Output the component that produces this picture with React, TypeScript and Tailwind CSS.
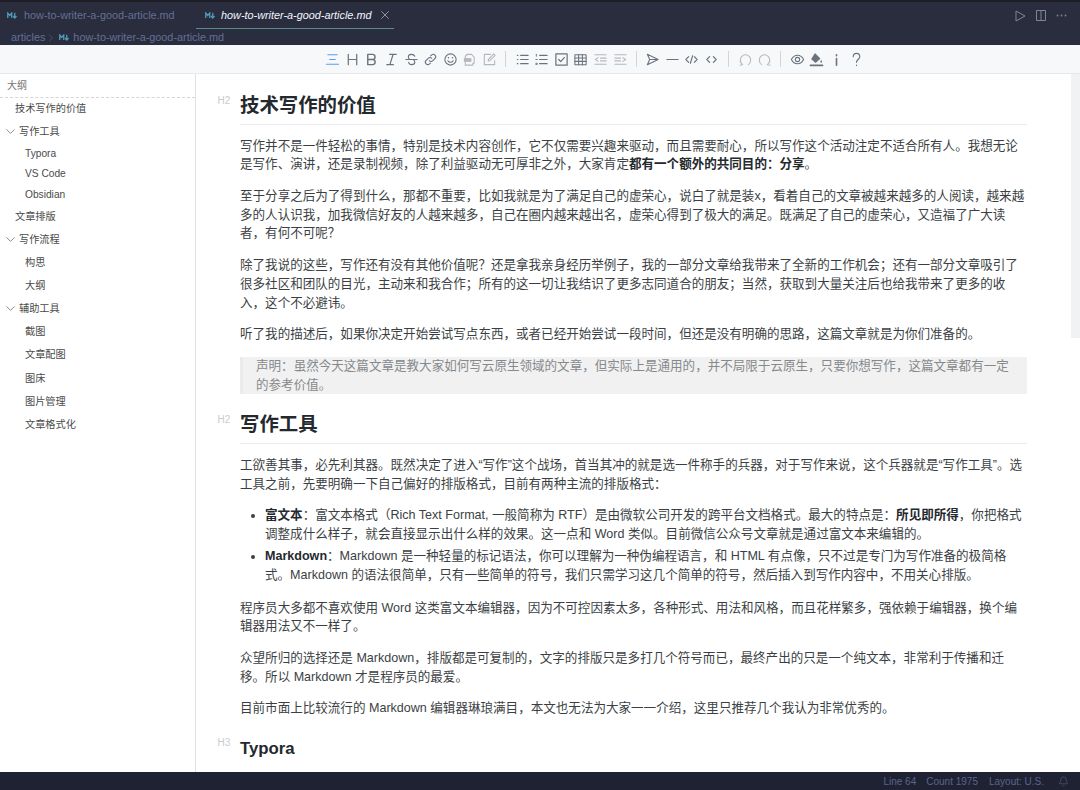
import React from "react";
import { ChevronDown, ChevronRight, X, Bell } from "lucide-react";

const FONT = "font-['Liberation_Sans','Noto_Sans_CJK_SC',sans-serif]";

function MdIcon() {
  return (
    <svg width="10" height="7" viewBox="0 0 20 14" fill="none" stroke="#519aba" strokeWidth="2.6" className="shrink-0">
      <path d="M1.5 12V2l4 5 4-5v10" />
      <path d="M15.5 1.5V11M12 8l3.5 4L19 8" />
    </svg>
  );
}

function Ico({ children, color = "#6a737d" }: { children: React.ReactNode; color?: string }) {
  return (
    <svg width="15" height="15" viewBox="0 0 16 16" fill="none" stroke={color} strokeWidth="1.15" strokeLinecap="round" strokeLinejoin="round">
      {children}
    </svg>
  );
}

function TB({ children }: { children: React.ReactNode }) {
  return <div className="w-[19.6px] h-[20px] flex items-center justify-center shrink-0">{children}</div>;
}

function Sep({ ml = "ml-[4px]", mr = "mr-[8px]" }: { ml?: string; mr?: string }) {
  return <div className={`w-px h-[16px] bg-[#d1d5da] shrink-0 ${ml} ${mr}`} />;
}

const LIGHT = "#b4b8bd";

function Toolbar() {
  return (
    <div className="h-[29px] bg-[#f6f8fa] border-b border-[#e6e8ea] flex items-center pl-[323px] shrink-0">
      <TB><Ico color="#5b9bf5"><path d="M3 3h10M5 8h6M1.500 13h13" strokeWidth="1.100" /></Ico></TB>
      <TB><Ico><path d="M3.500 2.500v11M12.500 2.500v11M3.500 8h9" strokeWidth="1.300" /></Ico></TB>
      <TB><Ico><path d="M4 2.500h5a2.700 2.700 0 0 1 0 5.500H4zM4 8h5.600a2.800 2.800 0 0 1 0 5.500H4z" strokeWidth="1.500" /></Ico></TB>
      <TB><Ico><path d="M6 2.500h7M3 13.500h7M9.700 2.500 6.300 13.500" strokeWidth="1.300" /></Ico></TB>
      <TB><Ico><path d="M2 8h12M11.500 4.500C11 3 9.700 2.500 8 2.500c-2 0-3.400 1-3.400 2.600 0 1 .5 1.900 1.400 2.900M5 11c.3 1.700 1.600 2.500 3.200 2.500 2 0 3.300-1 3.300-2.500 0-.8-.3-1.400-.8-2" /></Ico></TB>
      <TB><Ico><path d="M6.700 9.300a2.600 2.600 0 0 0 3.700 0l2.300-2.300a2.600 2.600 0 0 0-3.700-3.700l-.9.9M9.300 6.700a2.600 2.600 0 0 0-3.700 0L3.300 9a2.600 2.600 0 0 0 3.700 3.700l.9-.9" /></Ico></TB>
      <TB><Ico><circle cx="8" cy="8" r="6" /><path d="M5.200 9.300c.7 1.200 1.700 1.700 2.800 1.700s2.100-.5 2.800-1.700" /><path d="M5.800 6.200h.01M10.200 6.200h.01" strokeWidth="1.600" /></Ico></TB>
      <TB><Ico color={LIGHT}><path d="M5 4V2.500h5l3 3V12h-1.500M5 4H3.500v10H11.500v-2" /><rect x="2" y="6.500" width="8" height="4" fill={LIGHT} stroke="none" /></Ico></TB>
      <TB><Ico color={LIGHT}><path d="M13.500 9v4.500h-11v-11H9" /><path d="M6.500 9.500l.5-2 5.500-5.500 1.500 1.500L8.500 9z" /></Ico></TB>
      <Sep ml="ml-[6px]" mr="mr-[6px]" />
      <TB><Ico><path d="M6 3.500h8M6 8h8M6 12.500h8M2.500 3.500h.6M2.500 8h.6M2.500 12.500h.6" strokeWidth="1.300" /></Ico></TB>
      <TB><Ico><path d="M6 3.500h8M6 8h8M6 12.500h8" strokeWidth="1.300" /><path d="M2.500 2.500v2M2 8h1.500M2 12h1.500v1.200H2" strokeWidth="1" /></Ico></TB>
      <TB><Ico><rect x="2" y="2" width="12" height="12" strokeWidth="1.300" /><path d="M5 8l2.200 2.200L11 6" strokeWidth="1.300" /></Ico></TB>
      <TB><Ico><rect x="2" y="3" width="12" height="10.500" strokeWidth="1.100" /><path d="M2 6.500h12M2 10h12M6 3v10.500M10 3v10.500" strokeWidth="1.100" /></Ico></TB>
      <TB><Ico color={LIGHT}><path d="M2 3h12M8 6.500h6M8 9.500h6M2 13h12M5.500 6 2.500 8l3 2" /></Ico></TB>
      <TB><Ico color={LIGHT}><path d="M2 3h12M2 6.500h6M2 9.500h6M2 13h12M10.500 6l3 2-3 2" /></Ico></TB>
      <Sep ml="ml-[6px]" mr="mr-[6px]" />
      <TB><Ico><path d="M2.500 2.500 14 8 2.500 13.500 5 8zM5 8h9" strokeWidth="1.150" /></Ico></TB>
      <TB><Ico><path d="M2 8h12" strokeWidth="1.300" /></Ico></TB>
      <TB><Ico><path d="M5 5 2 8l3 3M11 5l3 3-3 3M9.200 4 6.800 12" strokeWidth="1.200" /></Ico></TB>
      <TB><Ico><path d="M6 5 3 8l3 3M10 5l3 3-3 3" strokeWidth="1.300" /></Ico></TB>
      <Sep ml="ml-[7px]" mr="mr-[6px]" />
      <TB><Ico color={LIGHT}><path d="M5 13.500C3.200 12.500 2.500 10.500 2.500 8.500a5.500 5.500 0 0 1 11 0c0 2-.7 4-2.500 5" strokeWidth="1.100" /><path d="M2.200 10.500 5 13.500l-3 .6" strokeWidth="1" /></Ico></TB>
      <TB><Ico color={LIGHT}><path d="M11 13.500c1.800-1 2.500-3 2.500-5a5.500 5.500 0 0 0-11 0c0 2 .7 4 2.500 5" strokeWidth="1.100" /><path d="M13.800 10.500 11 13.500l3 .6" strokeWidth="1" /></Ico></TB>
      <Sep ml="ml-[6px]" mr="mr-[6px]" />
      <TB><Ico><path d="M1.500 8C3 5 5.300 3.500 8 3.500S13 5 14.500 8C13 11 10.700 12.500 8 12.500S3 11 1.500 8z" /><circle cx="8" cy="8" r="2.300" /></Ico></TB>
      <TB><Ico><path d="M6.500 2 11.500 7 7 11 3 7.500z" fill="#6a737d" /><path d="M13 8.500c.6 1 .9 1.500.9 2a.9.9 0 0 1-1.800 0c0-.5.3-1 .9-2z" fill="#6a737d" stroke="none" /><path d="M1.500 14.300h13" strokeWidth="1.700" /></Ico></TB>
      <TB><Ico><path d="M8 7v7M8 3v.9" strokeWidth="1.700" /></Ico></TB>
      <TB><Ico><path d="M4.500 5c0-2 1.500-3.500 3.500-3.500S11.500 3 11.500 5c0 2.500-3.500 3-3.500 6M8 13.800v.6" strokeWidth="1.200" /></Ico></TB>
    </div>
  );
}

type Row = { t: string; pl: string; latin?: boolean; open?: boolean };
const outline: Row[] = [
  { t: "技术写作的价值", pl: "pl-[15px]" },
  { t: "写作工具", pl: "pl-[19px]", open: true },
  { t: "Typora", pl: "pl-[25px]", latin: true },
  { t: "VS Code", pl: "pl-[25px]", latin: true },
  { t: "Obsidian", pl: "pl-[25px]", latin: true },
  { t: "文章排版", pl: "pl-[15px]" },
  { t: "写作流程", pl: "pl-[19px]", open: true },
  { t: "构思", pl: "pl-[25px]" },
  { t: "大纲", pl: "pl-[25px]" },
  { t: "辅助工具", pl: "pl-[19px]", open: true },
  { t: "截图", pl: "pl-[25px]" },
  { t: "文章配图", pl: "pl-[25px]" },
  { t: "图床", pl: "pl-[25px]" },
  { t: "图片管理", pl: "pl-[25px]" },
  { t: "文章格式化", pl: "pl-[25px]" },
];

function Sidebar() {
  return (
    <aside className="w-[196px] shrink-0 border-r border-[#dfe2e5] bg-white pt-[1px]">
      <div className="h-[23px] flex items-center pl-[7px] pb-[1px] text-[10px] text-[#777] border-b border-dashed border-[#d5d5d5]">大纲</div>
      <div className="-mt-[1px]">
        {outline.map((r) => (
          <div
            key={r.t}
            className={`relative flex items-center text-[10.2px] text-[#4a4a4a] ${r.pl} ${r.latin ? "h-[20.6px]" : "h-[23.1px]"}`}
          >
            {r.open && <ChevronDown size={15} strokeWidth={1.1} className="absolute left-[3px] top-[4px] text-[#555]" />}
            {r.t}
          </div>
        ))}
      </div>
    </aside>
  );
}

function H2({ children }: { children: React.ReactNode }) {
  return (
    <h2 className="relative text-[19.4px] leading-[27px] font-bold text-[#24292e] pb-[4.500px] border-b border-[#eaecef] mb-[12px]">
      <span className="absolute left-[-22.500px] top-[-5px] text-[10px] font-normal text-[#c8ccd0]">H2</span>
      {children}
    </h2>
  );
}

function P({ children }: { children: React.ReactNode }) {
  return <p className="mb-[12.800px]">{children}</p>;
}

function Article() {
  return (
    <main className="relative flex-1 min-w-0 overflow-hidden bg-white pl-[44px] pr-[53px] pt-[18px] text-[12.55px] leading-[18.800px] text-[#3b3f44]">
      <H2>技术写作的价值</H2>
      <P>写作并不是一件轻松的事情，特别是技术内容创作，它不仅需要兴趣来驱动，而且需要耐心，所以写作这个活动注定不适合所有人。我想无论是写作、演讲，还是录制视频，除了利益驱动无可厚非之外，大家肯定<b className="text-[#24292e]">都有一个额外的共同目的：分享</b>。</P>
      <P>至于分享之后为了得到什么，那都不重要，比如我就是为了满足自己的虚荣心，说白了就是装x，看着自己的文章被越来越多的人阅读，越来越多的人认识我，加我微信好友的人越来越多，自己在圈内越来越出名，虚荣心得到了极大的满足。既满足了自己的虚荣心，又造福了广大读者，有何不可呢？</P>
      <P>除了我说的这些，写作还有没有其他价值呢？还是拿我亲身经历举例子，我的一部分文章给我带来了全新的工作机会；还有一部分文章吸引了很多社区和团队的目光，主动来和我合作；所有的这一切让我结识了更多志同道合的朋友；当然，获取到大量关注后也给我带来了更多的收入，这个不必避讳。</P>
      <P>听了我的描述后，如果你决定开始尝试写点东西，或者已经开始尝试一段时间，但还是没有明确的思路，这篇文章就是为你们准备的。</P>
      <blockquote className="bg-[#f1f1f1] border-l-[3px] border-[#ebebeb] pl-[13px] pr-[8px] mb-[17px] text-[#86898c]">声明：虽然今天这篇文章是教大家如何写云原生领域的文章，但实际上是通用的，并不局限于云原生，只要你想写作，这篇文章都有一定的参考价值。</blockquote>
      <H2>写作工具</H2>
      <P>工欲善其事，必先利其器。既然决定了进入“写作”这个战场，首当其冲的就是选一件称手的兵器，对于写作来说，这个兵器就是“写作工具”。选工具之前，先要明确一下自己偏好的排版格式，目前有两种主流的排版格式：</P>
      <ul className="list-disc pl-[25px] mb-[13.500px]">
        <li className="mb-[3.500px]"><b className="text-[#24292e]">富文本</b>：富文本格式（Rich Text Format, 一般简称为 RTF）是由微软公司开发的跨平台文档格式。最大的特点是：<b className="text-[#24292e]">所见即所得</b>，你把格式调整成什么样子，就会直接显示出什么样的效果。这一点和 Word 类似。目前微信公众号文章就是通过富文本来编辑的。</li>
        <li><b className="text-[#24292e]">Markdown</b>：Markdown 是一种轻量的标记语法，你可以理解为一种伪编程语言，和 HTML 有点像，只不过是专门为写作准备的极简格式。Markdown 的语法很简单，只有一些简单的符号，我们只需学习这几个简单的符号，然后插入到写作内容中，不用关心排版。</li>
      </ul>
      <P>程序员大多都不喜欢使用 Word 这类富文本编辑器，因为不可控因素太多，各种形式、用法和风格，而且花样繁多，强依赖于编辑器，换个编辑器用法又不一样了。</P>
      <P>众望所归的选择还是 Markdown，排版都是可复制的，文字的排版只是多打几个符号而已，最终产出的只是一个纯文本，非常利于传播和迁移。所以 Markdown 才是程序员的最爱。</P>
      <P>目前市面上比较流行的 Markdown 编辑器琳琅满目，本文也无法为大家一一介绍，这里只推荐几个我认为非常优秀的。</P>
      <h3 className="relative mt-[20px] text-[16.800px] leading-[22px] font-bold text-[#24292e]">
        <span className="absolute left-[-22.500px] top-[-6px] text-[10px] font-normal text-[#c8ccd0]">H3</span>
        Typora
      </h3>
      <div className="absolute right-0 top-0 w-[9px] h-[264px] bg-[#f1f2f4]" />
    </main>
  );
}

export default function App() {
  return (
    <div className={`w-[1080px] h-[790px] overflow-hidden flex flex-col bg-white ${FONT}`}>
      <div className="bg-[#292d3e] border-t-2 border-[#1d1e26] shrink-0">
        <div className="h-[27px] flex items-stretch text-[10.850px] whitespace-nowrap">
          <div className="w-[196px] flex items-center pl-[7px] gap-[7px] text-[#676e95]">
            <MdIcon />
            <span>how-to-writer-a-good-article.md</span>
          </div>
          <div className="w-[198px] flex items-center pl-[9px] gap-[6px] text-[#f4f6ff] italic border-b border-[#5d8a8c]">
            <MdIcon />
            <span>how-to-writer-a-good-article.md</span>
            <X size={14} strokeWidth={1.1} className="ml-[0.5px] text-[#c5cadf]" />
          </div>
          <div className="flex-1 flex items-center justify-end pr-[13px] gap-[10px]">
            <svg width="11" height="12" viewBox="0 0 11 12" fill="none" stroke="#80849a" strokeWidth="1"><path d="M1 1v10l9-5z" strokeLinejoin="round" /></svg>
            <svg width="10" height="11" viewBox="0 0 10 11" fill="none" stroke="#80849a" strokeWidth="1"><path d="M.5.5h9v10h-9zM5 .5v10" /></svg>
            <svg width="11" height="3" viewBox="0 0 11 3" fill="#80849a"><circle cx="1.500" cy="1.500" r=".9" /><circle cx="5.500" cy="1.500" r=".9" /><circle cx="9.500" cy="1.500" r=".9" /></svg>
          </div>
        </div>
        <div className="h-[16px] flex items-center pl-[11px] pt-[1px] text-[10.850px] text-[#676e95] whitespace-nowrap">
          <span>articles</span>
          <ChevronRight size={12} strokeWidth={1.1} />
          <span className="ml-[2px] mr-[4px]"><MdIcon /></span>
          <span>how-to-writer-a-good-article.md</span>
        </div>
      </div>
      <Toolbar />
      <div className="flex-1 min-h-0 flex">
        <Sidebar />
        <Article />
      </div>
      <div className="h-[18px] shrink-0 bg-[#1f2233] flex items-center justify-end pr-[11px] text-[10px] text-[#5d648c]">
        <span className="mr-[10px]">Line 64</span>
        <span className="mr-[11px]">Count 1975</span>
        <span className="mr-[14px]">Layout: U.S.</span>
        <Bell size={11} strokeWidth={1.2} />
      </div>
    </div>
  );
}
